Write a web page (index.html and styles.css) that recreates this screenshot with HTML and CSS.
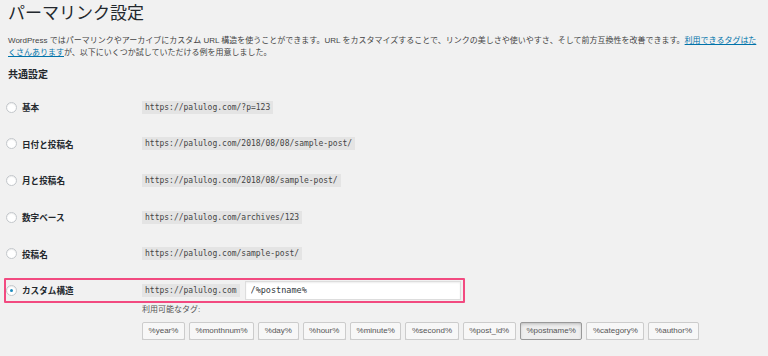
FILE: index.html
```html
<!DOCTYPE html>
<html lang="ja">
<head>
    <meta charset="UTF-8">
    <meta name="viewport" content="width=device-width, initial-scale=1.0">
    <title>パーマリンク設定</title>
    <link rel="stylesheet" href="styles.css">
</head>
<body>
    <div class="wrap">
        <h1>パーマリンク設定</h1>
        <p class="desc">WordPress ではパーマリンクやアーカイブにカスタム URL 構造を使うことができます。URL をカスタマイズすることで、リンクの美しさや使いやすさ、そして前方互換性を改善できます。<a href="#">利用できるタグはたくさんあります</a>が、以下にいくつか試していただける例を用意しました。</p>
        <h2>共通設定</h2>

        <div class="options">
            <div class="option-row">
                <label class="option-label"><span class="radio"></span>基本</label>
                <code>https://palulog.com/?p=123</code>
            </div>
            <div class="option-row">
                <label class="option-label"><span class="radio"></span>日付と投稿名</label>
                <code>https://palulog.com/2018/08/08/sample-post/</code>
            </div>
            <div class="option-row">
                <label class="option-label"><span class="radio"></span>月と投稿名</label>
                <code>https://palulog.com/2018/08/sample-post/</code>
            </div>
            <div class="option-row">
                <label class="option-label"><span class="radio"></span>数字ベース</label>
                <code>https://palulog.com/archives/123</code>
            </div>
            <div class="option-row">
                <label class="option-label"><span class="radio"></span>投稿名</label>
                <code>https://palulog.com/sample-post/</code>
            </div>

            <div class="custom">
                <div class="custom-box">
                    <label class="option-label"><span class="radio checked"></span>カスタム構造</label>
                    <code>https://palulog.com</code>
                    <input type="text" class="custom-input" value="/%postname%">
                </div>
                <div class="tags">
                    <div class="tags-title">利用可能なタグ:</div>
                    <div class="tag-list">
                        <button type="button" class="tag">%year%</button>
                        <button type="button" class="tag">%monthnum%</button>
                        <button type="button" class="tag">%day%</button>
                        <button type="button" class="tag">%hour%</button>
                        <button type="button" class="tag">%minute%</button>
                        <button type="button" class="tag">%second%</button>
                        <button type="button" class="tag">%post_id%</button>
                        <button type="button" class="tag active">%postname%</button>
                        <button type="button" class="tag">%category%</button>
                        <button type="button" class="tag">%author%</button>
                    </div>
                </div>
            </div>
        </div>
    </div>
</body>
</html>
```

FILE: styles.css
```css
body {
    margin: 0;
    background-color: #f1f1f1;
    color: #444;
    font-family: "Liberation Sans", "Noto Sans CJK JP", sans-serif;
}

.wrap {
    padding: 3px 8px 0 8px;
}

h1 {
    margin: 0;
    font-size: 17px;
    font-weight: 400;
    line-height: 22px;
    color: #23282d;
}

.desc {
    margin: 10px 0 0 0;
    font-size: 8px;
    line-height: 12px;
    color: #444;
}

.desc a {
    color: #0073aa;
}

h2 {
    margin: 9px 0 0 0;
    font-size: 10px;
    line-height: 14px;
    font-weight: 700;
    color: #23282d;
}

.options {
    margin-top: 7px;
}

.option-row {
    display: flex;
    align-items: center;
    height: 36.6px;
}

.option-label {
    display: flex;
    align-items: center;
    width: 136px;
    margin-left: -2px;
    flex-shrink: 0;
    font-size: 8.6px;
    font-weight: 700;
    color: #23282d;
}

.radio {
    width: 9px;
    height: 9px;
    margin-right: 5px;
    border: 1px solid #c3c7cb;
    border-radius: 50%;
    background: #fff;
    box-shadow: inset 0 1px 1px rgba(0, 0, 0, 0.08);
    display: flex;
    align-items: center;
    justify-content: center;
}

.radio.checked::after {
    content: "";
    width: 3px;
    height: 3px;
    border-radius: 50%;
    background: #1e8cbe;
}

code {
    font-family: "DejaVu Sans Mono", monospace;
    font-size: 8px;
    line-height: 13px;
    padding: 0 3px;
    background: #e4e4e4;
    color: #444;
}

.custom {
    margin-top: 6px;
}

.custom-box {
    display: flex;
    align-items: center;
    width: 455px;
    height: 21px;
    margin-left: -4px;
    padding: 0 0 0 2px;
    border: 2px solid #f24a80;
    border-radius: 1px;
}

.custom-input {
    margin-left: 5px;
    width: 216px;
    height: 19px;
    box-sizing: border-box;
    padding: 0 5px;
    border: 1px solid #ddd;
    background: #fff;
    box-shadow: inset 0 1px 2px rgba(0, 0, 0, 0.07);
    font-family: "DejaVu Sans Mono", monospace;
    font-size: 8.5px;
    color: #32373c;
    outline: none;
}

.tags {
    padding-left: 134px;
}

.tags-title {
    margin-top: 1px;
    font-size: 8px;
    line-height: 11px;
    color: #555;
}

.tag-list {
    display: flex;
    gap: 4px;
    margin-top: 7px;
}

.tag {
    height: 18px;
    padding: 0 5.6px;
    border: 1px solid #ccc;
    border-radius: 2px;
    background: #f7f7f7;
    box-shadow: 0 1px 0 #ccc;
    font-family: "Liberation Sans", "Noto Sans CJK JP", sans-serif;
    font-size: 8px;
    color: #555;
}

.tag.active {
    background: #eee;
    border-color: #999;
    box-shadow: inset 0 2px 5px -3px rgba(0, 0, 0, 0.5);
}
```
